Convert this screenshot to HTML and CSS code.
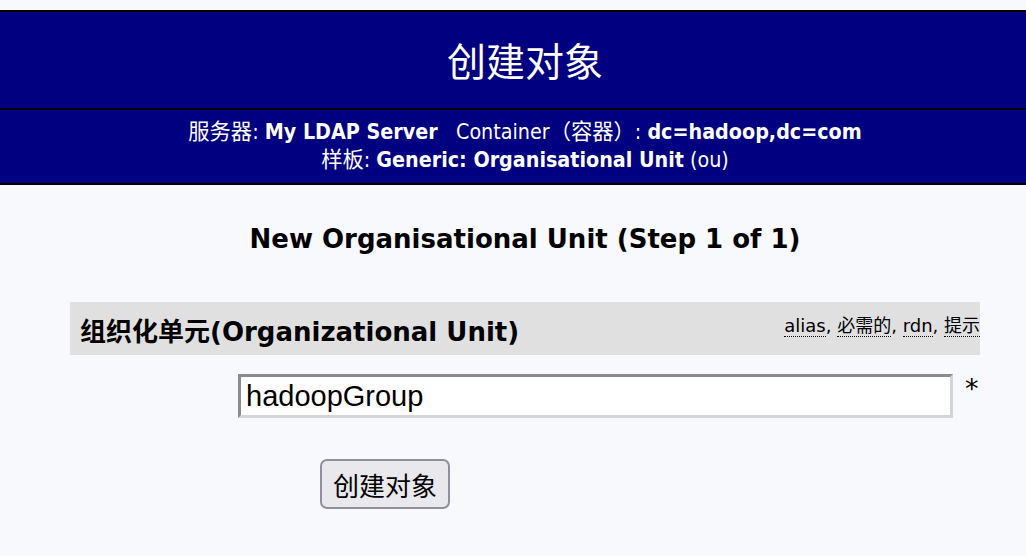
FILE: index.html
```html
<!DOCTYPE html>
<html lang="zh">
<head>
<meta charset="utf-8">
<title>创建对象</title>
<link rel="stylesheet" href="styles.css">
</head>
<body>
<div class="page">
  <div class="title-bar">创建对象</div>
  <div class="sub-bar">
    <div>服务器: <b>My LDAP Server</b>&nbsp;&nbsp;&nbsp;Container（容器）: <b>dc=hadoop,dc=com</b></div>
    <div>样板: <b>Generic: Organisational Unit</b> (ou)</div>
  </div>
  <h2 class="step">New Organisational Unit (Step 1 of 1)</h2>
  <div class="form">
    <div class="attr-head">
      <span class="attr-name">组织化单元(Organizational Unit)</span>
      <span class="attr-tags"><span class="tag">alias</span>, <span class="tag">必需的</span>, <span class="tag">rdn</span>, <span class="tag">提示</span></span>
    </div>
    <div class="attr-row">
      <input class="value" type="text" value="hadoopGroup">
      <span class="req">*</span>
    </div>
    <div class="submit-row">
      <button class="btn" type="button">创建对象</button>
    </div>
  </div>
</div>
</body>
</html>
```
FILE: styles.css
```css
html, body {
  margin: 0;
  padding: 0;
  background: #f8f9fc;
  overflow: hidden;
}
body {
  font-family: "DejaVu Sans", Verdana, "Noto Sans CJK SC", sans-serif;
  color: #000;
}
.page {
  width: 1050px;
  padding-top: 10px;
}
.title-bar {
  background: #000080;
  border-top: 2px solid #000;
  border-bottom: 2px solid #000;
  display: flex;
  align-items: center;
  justify-content: center;
  color: #fff;
  font-family: "Noto Sans CJK SC", sans-serif;
  font-size: 39px;
  padding-bottom: 2px;
  box-sizing: border-box;
  height: 100px;
}
.sub-bar {
  background: #000080;
  border-bottom: 2px solid #000;
  color: #fff;
  text-align: center;
  font-family: "DejaVu Sans Condensed", "Noto Sans CJK SC", sans-serif;
  font-size: 21.3px;
  line-height: 28px;
  padding: 8px 0 9px;
}
.sub-bar b {
  font-weight: bold;
}
.step {
  margin: 36px 0 0;
  text-align: center;
  font-size: 26px;
  line-height: 36px;
  font-weight: bold;
}
.form {
  margin: 45px 70px 0 70px;
}
.attr-head {
  background: #e0e0e0;
  height: 53px;
  display: flex;
  justify-content: space-between;
  align-items: center;
  padding: 0 0 0 10px;
}
.attr-name {
  font-family: "DejaVu Sans", "Noto Sans CJK SC", sans-serif;
  font-weight: bold;
  font-size: 26px;
  padding-top: 2px;
}
.attr-tags {
  font-family: "DejaVu Sans", "Noto Sans CJK SC", sans-serif;
  font-size: 18px;
  line-height: 22px;
  align-self: flex-start;
  margin-top: 13px;
}
.tag {
  border-bottom: 1px dotted #000;
}
.attr-row {
  display: flex;
  align-items: flex-start;
  padding: 19px 0 0 168px;
}
.value {
  width: 715px;
  height: 44px;
  box-sizing: border-box;
  border: 3px solid;
  border-color: #8c8c8c #d4d4d4 #d4d4d4 #8c8c8c;
  background: #fff;
  font-family: "Liberation Sans", Arial, sans-serif;
  font-size: 29px;
  padding: 0 5px;
  margin: 0;
  outline: none;
}
.req {
  font-family: "DejaVu Sans", sans-serif;
  font-size: 27px;
  margin-left: 12px;
  line-height: 30px;
}
.submit-row {
  padding: 41px 0 0 250px;
}
.btn {
  width: 130px;
  height: 50px;
  border: 2px solid #8f8f9d;
  border-radius: 7px;
  background: #e9e9ed;
  font-family: "Noto Sans CJK SC", sans-serif;
  font-size: 26px;
  color: #000;
  padding: 0;
}
```
